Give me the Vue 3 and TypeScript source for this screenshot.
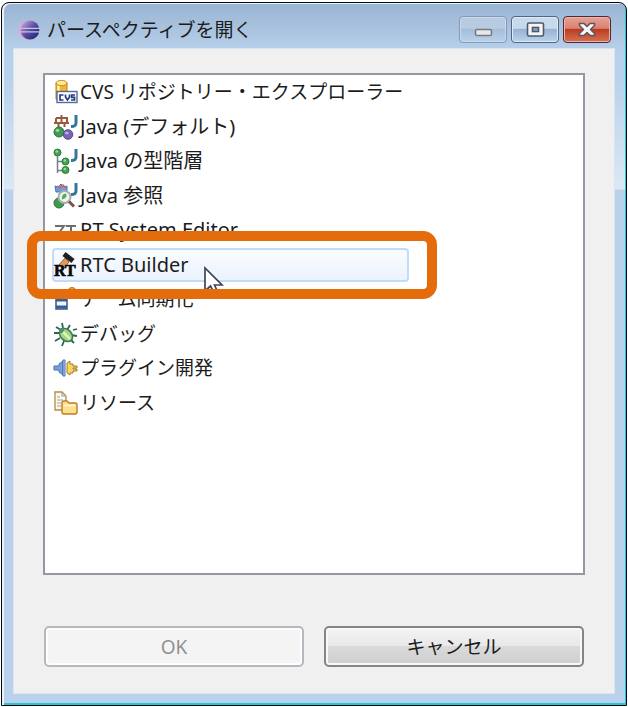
<script setup lang="ts">
import { ref } from 'vue'

interface Perspective {
  id: string
  label: string
  latin?: boolean
}

const perspectives: Perspective[] = [
  { id: 'cvs', label: 'CVS リポジトリー・エクスプローラー' },
  { id: 'java', label: 'Java (デフォルト)', latin: true },
  { id: 'hierarchy', label: 'Java の型階層', latin: true },
  { id: 'browse', label: 'Java 参照', latin: true },
  { id: 'editor', label: 'RT System Editor', latin: true },
  { id: 'builder', label: 'RTC Builder', latin: true },
  { id: 'team', label: 'チーム同期化' },
  { id: 'debug', label: 'デバッグ' },
  { id: 'plugin', label: 'プラグイン開発' },
  { id: 'resource', label: 'リソース' },
]

const hovered = ref('builder')
</script>

<template>
  <main class="window">
    <header class="titlebar">
      <svg class="logo" viewBox="0 0 22 20" aria-hidden="true">
        <defs>
          <linearGradient id="globe" x1="0" y1="0" x2="1" y2="1">
            <stop offset="0.1" stop-color="#b9a3dc" />
            <stop offset="0.5" stop-color="#5a4d9f" />
            <stop offset="1" stop-color="#171b6e" />
          </linearGradient>
        </defs>
        <circle cx="10" cy="10" r="9.6" fill="#e3a6cf" />
        <circle cx="12" cy="10" r="9.4" fill="url(#globe)" />
        <path d="M2 8.4H22M2 11.8H22" stroke="#c3c3ea" stroke-width="1.2" />
      </svg>
      <h1>パースペクティブを開く</h1>
      <div class="controls">
        <button type="button" class="control faded" aria-label="最小化">
          <svg viewBox="0 0 46 25"><rect x="15.5" y="12.5" width="16" height="6" rx="1.5" fill="#e8e8e8" stroke="#757a84" stroke-width="1.6" /></svg>
        </button>
        <button type="button" class="control" aria-label="最大化">
          <svg viewBox="0 0 46 25"><rect x="15.5" y="6" width="16" height="13" rx="1.5" fill="#f4f4f4" stroke="#50586b" stroke-width="1.6" /><rect x="20.5" y="10.5" width="6" height="4" fill="#86a7d3" stroke="#50586b" stroke-width="1.6" /></svg>
        </button>
        <button type="button" class="control close" aria-label="閉じる">
          <svg viewBox="0 0 46 25"><path d="M15.5 6.5H20L23 9.5L26 6.5H30.5V8.5L26.5 12.5L30.5 16.5V18.5H26L23 15.5L20 18.5H15.5V16.5L19.5 12.5L15.5 8.5Z" fill="#f7f7f7" stroke="#66505b" stroke-width="1.5" stroke-linejoin="round" /></svg>
        </button>
      </div>
    </header>

    <section class="body">
      <div class="list">
        <ul>
          <li
            v-for="item in perspectives"
            :key="item.id"
            :class="{ hovered: item.id === hovered, latin: item.latin }"
          >
            <svg class="icon" viewBox="0 0 26 26" aria-hidden="true">
              <g v-if="item.id === 'cvs'">
                <path d="M3 4V20C3 22 14 22 14 20V4Z" fill="#efb82c" stroke="#bd7c13" />
                <path d="M5.5 6V20" stroke="#fff1a8" stroke-width="2.5" />
                <ellipse cx="8.5" cy="4" rx="5.5" ry="2.6" fill="#ffe99b" stroke="#c58a20" />
                <rect x="4" y="12.5" width="20" height="11" fill="#fff" stroke="#536a9b" stroke-width="1.4" />
                <path d="M10.5 16H7V21H10.5M12.5 15.5V18L14.5 21L16.5 18V15.5M22 16H18.7V18.4H21.5V21H18" fill="none" stroke="#233d83" stroke-width="1.7" />
              </g>
              <g v-else-if="item.id === 'java'">
                <path d="M3 4H14V9M3 4V9M1 9H16M5.5 9V13M11.5 9V13M8.5 1V9" fill="none" stroke="#9b5b3b" stroke-width="2" />
                <path d="M23 1V9Q23 12.5 18 12.5" fill="none" stroke="#36769e" stroke-width="3" />
                <circle cx="6" cy="18" r="5" fill="#3f9a50" stroke="#24733b" />
                <ellipse cx="4.5" cy="16.5" rx="2" ry="1.4" fill="#9ed6a0" />
                <circle cx="15" cy="20.5" r="4.8" fill="#7865b1" stroke="#594794" />
                <ellipse cx="13.8" cy="19" rx="2" ry="1.3" fill="#bbb0df" />
              </g>
              <g v-else-if="item.id === 'hierarchy'">
                <path d="M4.5 5V25M4.5 13.5H12M4.5 22.5H12" fill="none" stroke="#75808b" stroke-width="1.5" />
                <g fill="#45a253" stroke="#257b3a"><circle cx="4.5" cy="4.5" r="3.5" /><circle cx="12.5" cy="13.5" r="3.5" /><circle cx="12.5" cy="22" r="3.5" /></g>
                <g fill="#a6d7a4"><circle cx="3.7" cy="3.5" r="1.2" /><circle cx="11.8" cy="12.5" r="1.2" /><circle cx="11.8" cy="21" r="1.2" /></g>
                <path d="M23 1V9Q23 12.5 18 12.5" fill="none" stroke="#36769e" stroke-width="3" />
              </g>
              <g v-else-if="item.id === 'browse'">
                <path d="M2 3L5 4L8 1L11 4L14 3V9H3Z" fill="#6d9de0" stroke="#4674bd" />
                <path d="M4 3L7 5L10 2L13 5" stroke="#d5674f" stroke-width="1.5" fill="none" />
                <circle cx="6" cy="20" r="5" fill="#3f9a50" stroke="#24733b" />
                <circle cx="11.5" cy="14" r="6" fill="#edf5ed" stroke="#a8aca8" stroke-width="2" />
                <path d="M9 16.5Q8 11 13 10.5Q15 15 9 16.5" fill="#55a967" />
                <path d="M16 18.5L21 23.5" stroke="#765449" stroke-width="3" />
                <path d="M23 0V8Q23 11.5 18 11.5" fill="none" stroke="#36769e" stroke-width="3" />
              </g>
              <g v-else-if="item.id === 'editor'" fill="none" stroke="#6f6c6c" stroke-width="2">
                <path d="M2 9H11L3 20H11M13 9H23M18 9V21" />
              </g>
              <g v-else-if="item.id === 'builder'">
                <path d="M5 14L12 6L16 10L11 16Z" fill="#dc9a60" stroke="#a86636" />
                <path d="M11 2L20 9" stroke="#202020" stroke-width="5" />
                <text class="mark" x="1" y="24">RT</text>
              </g>
              <g v-else-if="item.id === 'team'">
                <path d="M8 8L12 3V8" fill="#7188ac" />
                <circle cx="19" cy="6" r="4.5" fill="#e6a83e" stroke="#b77922" />
                <rect x="3" y="7" width="11" height="16" fill="#f2f7ff" stroke="#35577f" stroke-width="1.5" />
                <path d="M3 14H14M3 21H14" stroke="#315fa0" stroke-width="3" />
              </g>
              <g v-else-if="item.id === 'debug'">
                <path d="M3 6L8 9M9 2L10 7M17 4L14 9M20 9L24 8M18 14L24 15M17 18L21 22M11 20L9 25M7 17L2 20M6 12L1 12" fill="none" stroke="#316353" stroke-width="1.8" />
                <ellipse cx="13" cy="14" rx="5.5" ry="7.5" transform="rotate(-45 13 14)" fill="#a5d482" stroke="#397b4a" stroke-width="1.5" />
                <circle cx="8.5" cy="9.5" r="2.6" fill="#4d8f70" />
                <path d="M10 11L17 18" stroke="#e0f2bc" stroke-width="2.5" />
              </g>
              <g v-else-if="item.id === 'plugin'">
                <path d="M1 11H6V9L10 6V20L6 17V15H1Z" fill="#78a1dc" stroke="#476fb0" />
                <path d="M10 5H12V21H10Z" fill="#b7d0f3" stroke="#476fb0" />
                <path d="M14 8L17 6V9H20V11H24V13H20V14H24V16H20V18H17V20L14 18Z" fill="#f6d568" stroke="#a87a25" />
              </g>
              <g v-else>
                <path d="M2 2H9L13 6V20H2Z" fill="#fffae5" stroke="#b58b42" stroke-width="1.3" />
                <path d="M9 2V6H13M4 7H7M4 10H10M4 13H8M4 16H8" fill="none" stroke="#91a3bd" stroke-width="1.2" />
                <path d="M9 13Q9 11 11 11H14L16 13H22Q24 13 24 15V22Q24 24 22 24H11Q9 24 9 22Z" fill="#ffe093" stroke="#bd7c29" stroke-width="1.4" />
                <path d="M10.5 15.5H22.5" stroke="#fff4cd" stroke-width="1.5" />
              </g>
            </svg>
            <span class="label">{{ item.label }}</span>
            <template v-if="item.id === hovered">
              <svg class="cursor" viewBox="0 0 22 32" aria-hidden="true">
                <path d="M2 2V25L7.5 20L11.5 28L15 26.5L11.5 19H19Z" fill="#fff" stroke="#3f4358" stroke-width="1.7" />
              </svg>
              <span class="callout"></span>
            </template>
          </li>
        </ul>
      </div>
      <footer class="actions">
        <button type="button" class="action" disabled>OK</button>
        <button type="button" class="action">キャンセル</button>
      </footer>
    </section>
  </main>
</template>

<style>
body {
  background: #fff;
}
</style>

<style scoped>
.window {
  box-sizing: border-box;
  display: flex;
  flex-direction: column;
  height: calc(100vh - 3px);
  min-height: 560px;
  margin: 2px 1px 1px;
  padding: 0 11px 11px;
  border: 1px solid #080808;
  border-radius: 8px 8px 0 0;
  background: linear-gradient(#99b4d1, #b7d0eb 48px, #b7d0eb 70px, #dce8f5 186px, #b9d1ea 187px);
  box-shadow: inset 2px 1px #e8f4fb, inset -1px -2px #25c5dc;
  color: #1c1c1c;
  font-family: "Noto Sans", "Noto Sans CJK JP", sans-serif;
  font-size: 19px;
  line-height: 28px;
}

.titlebar {
  display: flex;
  align-items: center;
  flex: none;
  height: 45px;
  padding: 8px 4px 0 5px;
  box-sizing: border-box;
}

.logo {
  width: 22px;
  height: 20px;
  margin-right: 7px;
}

h1 {
  flex: 1;
  margin: 0;
  font-size: 19px;
  font-weight: 400;
}

.controls {
  display: flex;
  gap: 4px;
}

.control {
  width: 48px;
  height: 27px;
  padding: 0;
  border: 1px solid #56647d;
  border-radius: 4px;
  background: linear-gradient(#c7d9ec 45%, #98b4d3 50%, #b9d4ee);
  box-shadow: inset 0 0 0 1px #dfebf7;
}

.control svg {
  display: block;
  width: 46px;
  height: 25px;
}

.control.faded {
  border-color: #8698b3;
  background: linear-gradient(#b7cbe1 45%, #a5bfdb 50%, #b9d1e9);
  box-shadow: inset 0 0 0 1px #c9daec;
}

.control.close {
  border-color: #582334;
  background: linear-gradient(#e4a394, #d98170 45%, #bc3c22 50%, #d27354);
  box-shadow: inset 0 0 0 1px #edb5a8;
}

.body {
  display: flex;
  flex: 1;
  flex-direction: column;
  gap: 51px;
  padding: 24px 29px 26px;
  border: 1px solid #d7e4f2;
  background: #f0f0f0;
}

.list {
  flex: 1;
  border: 2px solid #9498a2;
  background: #fff;
}

ul {
  display: grid;
  grid-template-rows: repeat(10, 1fr);
  width: fit-content;
  height: 345px;
  margin: 0;
  padding: 0 0 0 7px;
  list-style: none;
}

li {
  position: relative;
  display: flex;
  align-items: center;
  box-sizing: border-box;
  padding-right: 5px;
  border: 1px solid transparent;
  border-radius: 4px;
  white-space: nowrap;
}

li.latin {
  font-size: 20px;
}

li.hovered {
  z-index: 1;
  border: 2px solid #c0dcf9;
  padding: 0 4px 0 0;
  background: linear-gradient(#fafcff, #ebf3fd);
}

.icon {
  flex: none;
  width: 26px;
  height: 26px;
  margin-right: 1px;
  overflow: visible;
}

.hovered .icon {
  margin-left: -1px;
}

.mark {
  font-family: "Liberation Serif", serif;
  font-size: 16px;
  font-weight: 700;
  fill: #080808;
  stroke: #080808;
  stroke-width: 0.6px;
}

.cursor {
  position: absolute;
  top: 16px;
  left: 149px;
  width: 22px;
  height: 32px;
}

.callout {
  position: absolute;
  inset: -19px -30px -19px -27px;
  border: 10px solid #e46c0a;
  border-radius: 14px;
  pointer-events: none;
}

.actions {
  display: grid;
  grid-template-columns: 1fr 1fr;
  gap: 20px;
  margin: 0 1px;
}

.action {
  height: 41px;
  padding: 0;
  border: 2px solid #858585;
  border-radius: 5px;
  background: linear-gradient(#f3f3f3, #e9e9e9 48%, #dadada 50%, #cecece);
  box-shadow: inset 0 0 0 2px #f8f8f8;
  color: #1c1c1c;
  font: inherit;
}

.action:disabled {
  border-color: #b3b9bf;
  background: #f4f4f4;
  box-shadow: inset 0 0 0 2px #fdfdfd;
  color: #919191;
}
</style>
